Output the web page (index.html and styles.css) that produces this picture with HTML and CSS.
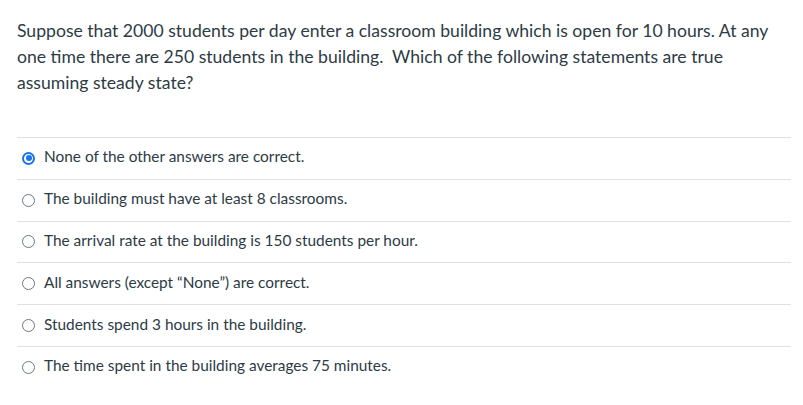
FILE: index.html
```html
<!DOCTYPE html>
<html>
<head>
<meta charset="utf-8">
<link rel="stylesheet" href="styles.css">
</head>
<body>
<div class="question">
  <p class="text">Suppose that 2000 students per day enter a classroom building which is open for 10 hours. At any one time there are 250 students in the building.&nbsp; Which of the following statements are true assuming steady state?</p>
  <div class="answers">
    <div class="answer"><span class="radio checked"></span><span class="label">None of the other answers are correct.</span></div>
    <div class="answer"><span class="radio"></span><span class="label">The building must have at least 8 classrooms.</span></div>
    <div class="answer"><span class="radio"></span><span class="label">The arrival rate at the building is 150 students per hour.</span></div>
    <div class="answer"><span class="radio"></span><span class="label">All answers (except “None”) are correct.</span></div>
    <div class="answer"><span class="radio"></span><span class="label">Students spend 3 hours in the building.</span></div>
    <div class="answer"><span class="radio"></span><span class="label">The time spent in the building averages 75 minutes.</span></div>
  </div>
</div>
</body>
</html>
```
FILE: styles.css
```css
html, body { margin: 0; padding: 0; background: #fff; }
body { font-family: Lato, "Open Sans", sans-serif; color: #2d3b45; }
.question { padding: 18px 12px 0 17px; }
.text { margin: 0; font-size: 17.6px; line-height: 26px; width: 770px; }
.answers { margin-top: 41px; border-top: 1px solid #dfe2e4; width: 774px; }
.answer { display: flex; align-items: center; height: 40.8px; border-bottom: 1px solid #dfe2e4; font-size: 15.4px; }
.answer:last-child { border-bottom: none; }
.radio { box-sizing: border-box; width: 13px; height: 13px; border-radius: 50%; border: 1px solid #6b7780; margin: 0 9px 0 5px; flex: none; position: relative; }
.radio.checked { border: 2px solid #1a73e8; }
.radio.checked::after { content: ""; position: absolute; left: 1.5px; top: 1.5px; width: 6px; height: 6px; border-radius: 50%; background: #1a73e8; }
.label { line-height: 18px; margin-bottom: 4px; }
```
